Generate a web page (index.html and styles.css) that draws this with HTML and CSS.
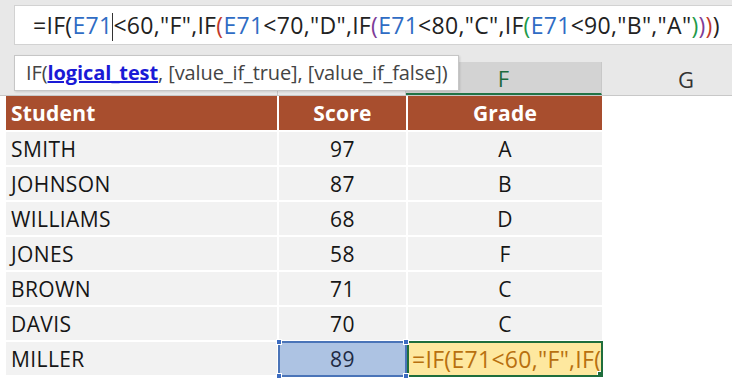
FILE: index.html
```html
<!DOCTYPE html>
<html>
<head>
<meta charset="utf-8">
<link rel="stylesheet" href="styles.css">
</head>
<body>
<div class="app">
  <div class="top">
    <div class="fbar">=IF(<span class="ref">E71</span><span class="caret"></span>&lt;60,"F",IF<span class="p2">(</span><span class="ref">E71</span>&lt;70,"D",IF<span class="p3">(</span><span class="ref">E71</span>&lt;80,"C",IF<span class="p4">(</span><span class="ref">E71</span>&lt;90,"B","A"<span class="p4">)</span><span class="p3">)</span><span class="p2">)</span>)</div>
    <div class="colheads">
      <div class="ch ch-d"></div>
      <div class="ch ch-e"></div>
      <div class="ch ch-f">F</div>
      <div class="ch ch-g">G</div>
    </div>
    <div class="tip">IF(<span class="arg">logical_test</span>, [value_if_true], [value_if_false])</div>
  </div>
  <div class="sheet">
    <div class="grid">
      <div class="c hd">Student</div><div class="c hd ctr">Score</div><div class="c hd ctr">Grade</div>
      <div class="c">SMITH</div><div class="c ctr">97</div><div class="c ctr">A</div>
      <div class="c">JOHNSON</div><div class="c ctr">87</div><div class="c ctr">B</div>
      <div class="c">WILLIAMS</div><div class="c ctr">68</div><div class="c ctr">D</div>
      <div class="c">JONES</div><div class="c ctr">58</div><div class="c ctr">F</div>
      <div class="c">BROWN</div><div class="c ctr">71</div><div class="c ctr">C</div>
      <div class="c">DAVIS</div><div class="c ctr">70</div><div class="c ctr">C</div>
      <div class="c">MILLER</div>
      <div class="c ctr sel">89<i class="h tl"></i><i class="h tr"></i><i class="h bl"></i><i class="h br"></i></div>
      <div class="c edit"><span class="etext">=IF(E71&lt;60,"F",IF(</span><i class="gh"></i></div>
    </div>
  </div>
</div>
</body>
</html>
```
FILE: styles.css
```css
* { box-sizing: border-box; }
html, body { margin: 0; padding: 0; background: #fff; }
.app { width: 732px; height: 381px; overflow: hidden; font-family: "Open Sans", "Noto Sans", sans-serif; }
.top { position: relative; background: #e8e8e8; padding: 5px 0 0 14px; height: 96px; display: flex; flex-direction: column; }
.fbar { height: 40px; flex-shrink: 0; background: #fff; border: 1px solid #d2d2d2; border-right: none; padding-left: 18px; font-size: 23px; letter-spacing: 0.3px; line-height: 38px; color: #222; white-space: nowrap; overflow: hidden; }
.ref { color: #2f6cc4; }
.p2 { color: #c0392b; }
.p3 { color: #7d3c98; }
.p4 { color: #1e9a4a; }
.caret { display: inline-block; width: 1px; height: 28px; background: #333; vertical-align: -7px; }
.colheads { margin-top: 17px; margin-left: -14px; height: 34px; display: flex; border-bottom: 1px solid #c8c8c8; }
.ch { flex-shrink: 0; height: 100%; border-right: 1px solid #c8c8c8; font-size: 22px; color: #333; display: flex; align-items: center; justify-content: center; }
.ch-d { width: 278px; }
.ch-e { width: 128px; }
.ch-f { width: 196px; background: #d3d3d3; color: #1e6b3d; border-bottom: 2px solid #217346; }
.ch-g { width: 168px; border-right: none; }
.tip { position: absolute; left: 14px; top: 55px; width: 445px; height: 36px; background: #fff; border: 1px solid #c6c6c6; box-shadow: 1px 1px 2px rgba(0,0,0,.12); font-size: 20px; letter-spacing: -0.1px; line-height: 33px; padding-left: 11px; color: #444; white-space: nowrap; }
.arg { color: #1a1ad6; font-weight: bold; text-decoration: underline; }
.sheet { padding-left: 6px; }
.grid { width: 596px; display: grid; grid-template-columns: 271px 127px 194px; grid-template-rows: 34px repeat(7, 33px); column-gap: 2px; row-gap: 2px; }
.c { background: #f2f2f2; font-size: 21px; color: #161616; display: flex; align-items: center; padding-left: 5px; white-space: nowrap; position: relative; letter-spacing: 0.4px; }
.ctr { justify-content: center; padding-left: 0; }
.hd { background: #a84e2e; color: #fff; font-weight: bold; font-size: 21px; letter-spacing: 0.2px; }
.sel { background: #adc3e3; border: 2px solid #4a74b8; margin: -1px -1px -2px -1px; color: #1e2a44; z-index: 2; }
.h { position: absolute; width: 6px; height: 6px; background: #3d6cc0; border: 1px solid #fff; }
.tl { left: -4px; top: -4px; }
.tr { right: -4px; top: -4px; }
.bl { left: -4px; bottom: -4px; }
.br { right: -4px; bottom: -4px; }
.edit { background: #fee89f; border: 2px solid #1f6e3c; margin: -1px -1px -2px -1px; color: #b8700f; padding-left: 3px; overflow: hidden; }
.etext { font-size: 23px; letter-spacing: 0.3px; }
.gh { position: absolute; right: -1px; bottom: -1px; width: 5px; height: 5px; background: #1f6e3c; border: 1px solid #fff; }
```
